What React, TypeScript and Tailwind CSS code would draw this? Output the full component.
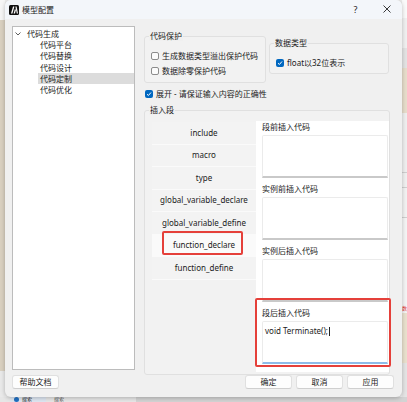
import type { ReactNode } from 'react';

const FONT = '"Noto Sans", "Noto Sans CJK SC", sans-serif';

const treeChildren = ['代码平台', '代码替换', '代码设计', '代码定制', '代码优化'];

const segments = [
  'include',
  'macro',
  'type',
  'global_variable_declare',
  'global_variable_define',
  'function_declare',
  'function_define',
];

const Checkbox = ({ checked, label }: { checked?: boolean; label: string }) => (
  <div className="flex items-center h-[15px]">
    {checked ? (
      <span className="w-[8px] h-[8px] rounded-[2px] bg-[#0067c0] flex items-center justify-center">
        <svg width="6" height="6" viewBox="0 0 6 6">
          <polyline
            points="1,3.2 2.4,4.5 5,1.5"
            fill="none"
            stroke="#fff"
            strokeWidth="1"
          />
        </svg>
      </span>
    ) : (
      <span className="w-[8px] h-[8px] rounded-[2px] border border-[#8c8c8c] bg-[#fbfbfb]" />
    )}
    <span className="ml-[3px] text-[8px] leading-[10px]">{label}</span>
  </div>
);

const GroupBox = ({
  title,
  className,
  boxClass,
  children,
}: {
  title: string;
  className?: string;
  boxClass?: string;
  children: ReactNode;
}) => (
  <div className={className}>
    <div className="relative z-10 ml-[5px] w-fit px-[1px] bg-[#f0f0f0] text-[8px] leading-[10px]">
      {title}
    </div>
    <div
      className={`-mt-[5px] border border-[#e0e0e0] rounded-[3px] bg-[#f2f2f2] ${boxClass ?? ''}`}
    >
      {children}
    </div>
  </div>
);

const CodeSection = ({
  label,
  value,
  focused,
}: {
  label: string;
  value?: string;
  focused?: boolean;
}) => (
  <div className="mb-[5px]">
    <div className="h-[14px] leading-[12px] pl-[6px] text-[8px]">{label}</div>
    <div
      className={`ml-[6px] mr-[1px] h-[43px] bg-white border-x border-t border-[#ebebeb] border-b-2 rounded-t-[2px] ${
        focused ? 'border-b-[#8dbbe8]' : 'border-b-[#c9c9c9]'
      }`}
    >
      {value && (
        <div className="pt-[4px] pl-[2px] text-[8px] leading-[10px] flex items-center">
          {value}
          <span className="inline-block w-px h-[9px] bg-[#222] ml-[1px]" />
        </div>
      )}
    </div>
  </div>
);

const DialogButton = ({ children }: { children: ReactNode }) => (
  <button
    type="button"
    className="w-[47px] h-[14px] rounded-[3px] bg-[#fdfdfd] border border-[#e0e0e0] border-b-[#cfcfcf] text-[8px] leading-[12px] text-[#1b1b1b]"
  >
    {children}
  </button>
);

const AppLogo = () => (
  <svg width="10" height="10" viewBox="0 0 10 10">
    <rect width="10" height="10" rx="1.5" fill="#111" />
    <polygon points="2,8.5 3.4,8.5 5.4,1.5 4,1.5" fill="#fff" />
    <polygon points="4.6,8.5 6,8.5 6.8,5.6 6.1,3.6" fill="#fff" />
    <polygon points="6.4,1.5 7.6,1.5 9,8.5 7.8,8.5" fill="#fff" />
  </svg>
);

export default function App() {
  return (
    <div
      className="relative w-[407px] h-[402px] overflow-hidden text-[#1b1b1b]"
      style={{ fontFamily: FONT }}
    >
      {/* desktop behind the window */}
      <div className="flex flex-col h-full">
        <div className="flex flex-1">
          <div className="w-[5px] flex flex-col">
            <div className="h-[20px] bg-[#f6f6f6]" />
            <div className="flex-1 bg-[#d9d0c0]" />
            <div className="h-[26px] bg-[#e9e9e9]" />
          </div>
          <div className="flex-1 bg-[#ececec]" />
          <div className="w-[5px] flex flex-col">
            <div className="h-[18px] bg-[#fafafa]" />
            <div className="h-[30px] bg-[#f0f0f0]" />
            <div className="h-[20px] bg-[#e3e3e3]" />
            <div className="h-[45px] bg-[#e7ddcb]" />
            <div className="h-[60px] bg-[#efefef] border-b border-[#cfcfcf]" />
            <div className="h-[15px] bg-[#f0f0f0] border-b border-[#cfcfcf]" />
            <div className="h-[30px] bg-[#f2f2f2] border-b border-[#cfcfcf]" />
            <div className="h-[85px] bg-[#f4f4f4]" />
            <div className="h-[10px] bg-[#f4f4f4] text-[#e03030] text-[5px] leading-[10px]">
              数
            </div>
            <div className="h-[50px] bg-[#e9e0cd]" />
            <div className="flex-1 bg-[#e4e4e4]" />
          </div>
        </div>
        <div className="h-[5px] flex bg-[#e6e6e6] overflow-hidden">
          <div className="ml-[10px] w-[36px] bg-[#dde6f1] flex items-center pl-[4px] gap-[3px]">
            <span className="w-[5px] h-[5px] rounded-full bg-[#1f6fc2]" />
            <span className="text-[5px] leading-[5px]">搜索</span>
          </div>
          <div className="ml-[4px] w-[86px] flex items-center text-[5px] leading-[5px] text-[#555] pl-[4px]">
            搜索
          </div>
          <div className="flex-1 bg-[#d3d3d3]" />
        </div>
      </div>

      {/* dialog window */}
      <div className="absolute left-[5px] top-0 w-[397px] h-[397px] rounded-[6px] bg-[#f0f0f0] shadow-[0_1px_4px_rgba(0,0,0,0.25)] flex flex-col overflow-hidden">
        <div className="h-[20px] bg-[#f3f6fa] flex items-center pl-[4px]">
          <AppLogo />
          <span className="ml-[3px] text-[8px] leading-[10px]">模型配置</span>
          <div className="ml-auto flex gap-[3px]">
            <span className="w-[30px] text-center text-[9px] leading-[10px] pl-[3px]">?</span>
            <span className="w-[30px] flex justify-center">
              <svg width="8" height="8" viewBox="0 0 8 8">
                <path d="M0.5 0.5 L7.5 7.5 M7.5 0.5 L0.5 7.5" stroke="#222" strokeWidth="0.9" />
              </svg>
            </span>
          </div>
        </div>

        <div className="flex px-[7px] pt-[7px]">
          {/* navigation tree */}
          <div className="w-[123px] h-[344px] border border-[#bcbcbc] bg-white pt-px text-[8px]">
            <div className="h-[11.3px] flex items-center pl-[2px]">
              <svg width="6" height="4" viewBox="0 0 6 4">
                <polyline points="0.5,0.5 3,3 5.5,0.5" fill="none" stroke="#333" strokeWidth="0.8" />
              </svg>
              <span className="ml-[6px] leading-[10px]">代码生成</span>
            </div>
            {treeChildren.map((item) => (
              <div key={item} className="h-[11.3px] flex pl-[25px]">
                <div
                  className={`flex-1 flex items-center pl-[2px] leading-[10px] ${
                    item === '代码定制' ? 'bg-[#dcdcdc]' : ''
                  }`}
                >
                  {item}
                </div>
              </div>
            ))}
          </div>

          {/* settings */}
          <div className="ml-[9px] w-[246px] flex flex-col">
            <div className="flex gap-[3px] items-start">
              <GroupBox
                title="代码保护"
                className="mt-[5px] w-[122px]"
                boxClass="pt-[11px] pb-[4px] pl-[6px]"
              >
                <Checkbox label="生成数据类型溢出保护代码" />
                <Checkbox label="数据除零保护代码" />
              </GroupBox>
              <GroupBox
                title="数据类型"
                className="mt-[12px] w-[120px]"
                boxClass="pt-[11px] pb-[3px] pl-[6px]"
              >
                <Checkbox checked label="float以32位表示" />
              </GroupBox>
            </div>

            <div className="mt-[3px] pl-px">
              <Checkbox checked label="展开 - 请保证输入内容的正确性" />
            </div>

            <GroupBox
              title="插入段"
              className="mt-[4px]"
              boxClass="pt-[10px] pb-[2px] pl-[7px] flex"
            >
              <div className="relative w-[104px] mt-px">
                {segments.map((seg) => (
                  <div
                    key={seg}
                    className={`h-[22.5px] flex items-center justify-center border-b border-[#fafafa] text-[8px] ${
                      seg === 'function_declare' ? 'bg-[#fafafa]' : 'bg-[#f3f3f3]'
                    }`}
                  >
                    {seg}
                  </div>
                ))}
                <div className="absolute left-[10px] top-[109px] w-[81px] h-[24px] border-2 border-[#e5403a] rounded-[2px]" />
              </div>

              <div className="relative flex-1 bg-white pb-[3px]">
                <CodeSection label="段前插入代码" />
                <CodeSection label="实例前插入代码" />
                <CodeSection label="实例后插入代码" />
                <CodeSection label="段后插入代码" value="void Terminate();" focused />
                <div className="absolute left-[-1px] top-[177px] w-[136px] h-[69px] border-2 border-[#e5403a] rounded-[2px]" />
              </div>
            </GroupBox>
          </div>
        </div>

        <div className="mt-auto mb-[8px] flex pl-[7px] pr-[8px]">
          <DialogButton>帮助文档</DialogButton>
          <div className="ml-auto flex gap-[4px]">
            <DialogButton>确定</DialogButton>
            <DialogButton>取消</DialogButton>
            <DialogButton>应用</DialogButton>
          </div>
        </div>
      </div>
    </div>
  );
}
